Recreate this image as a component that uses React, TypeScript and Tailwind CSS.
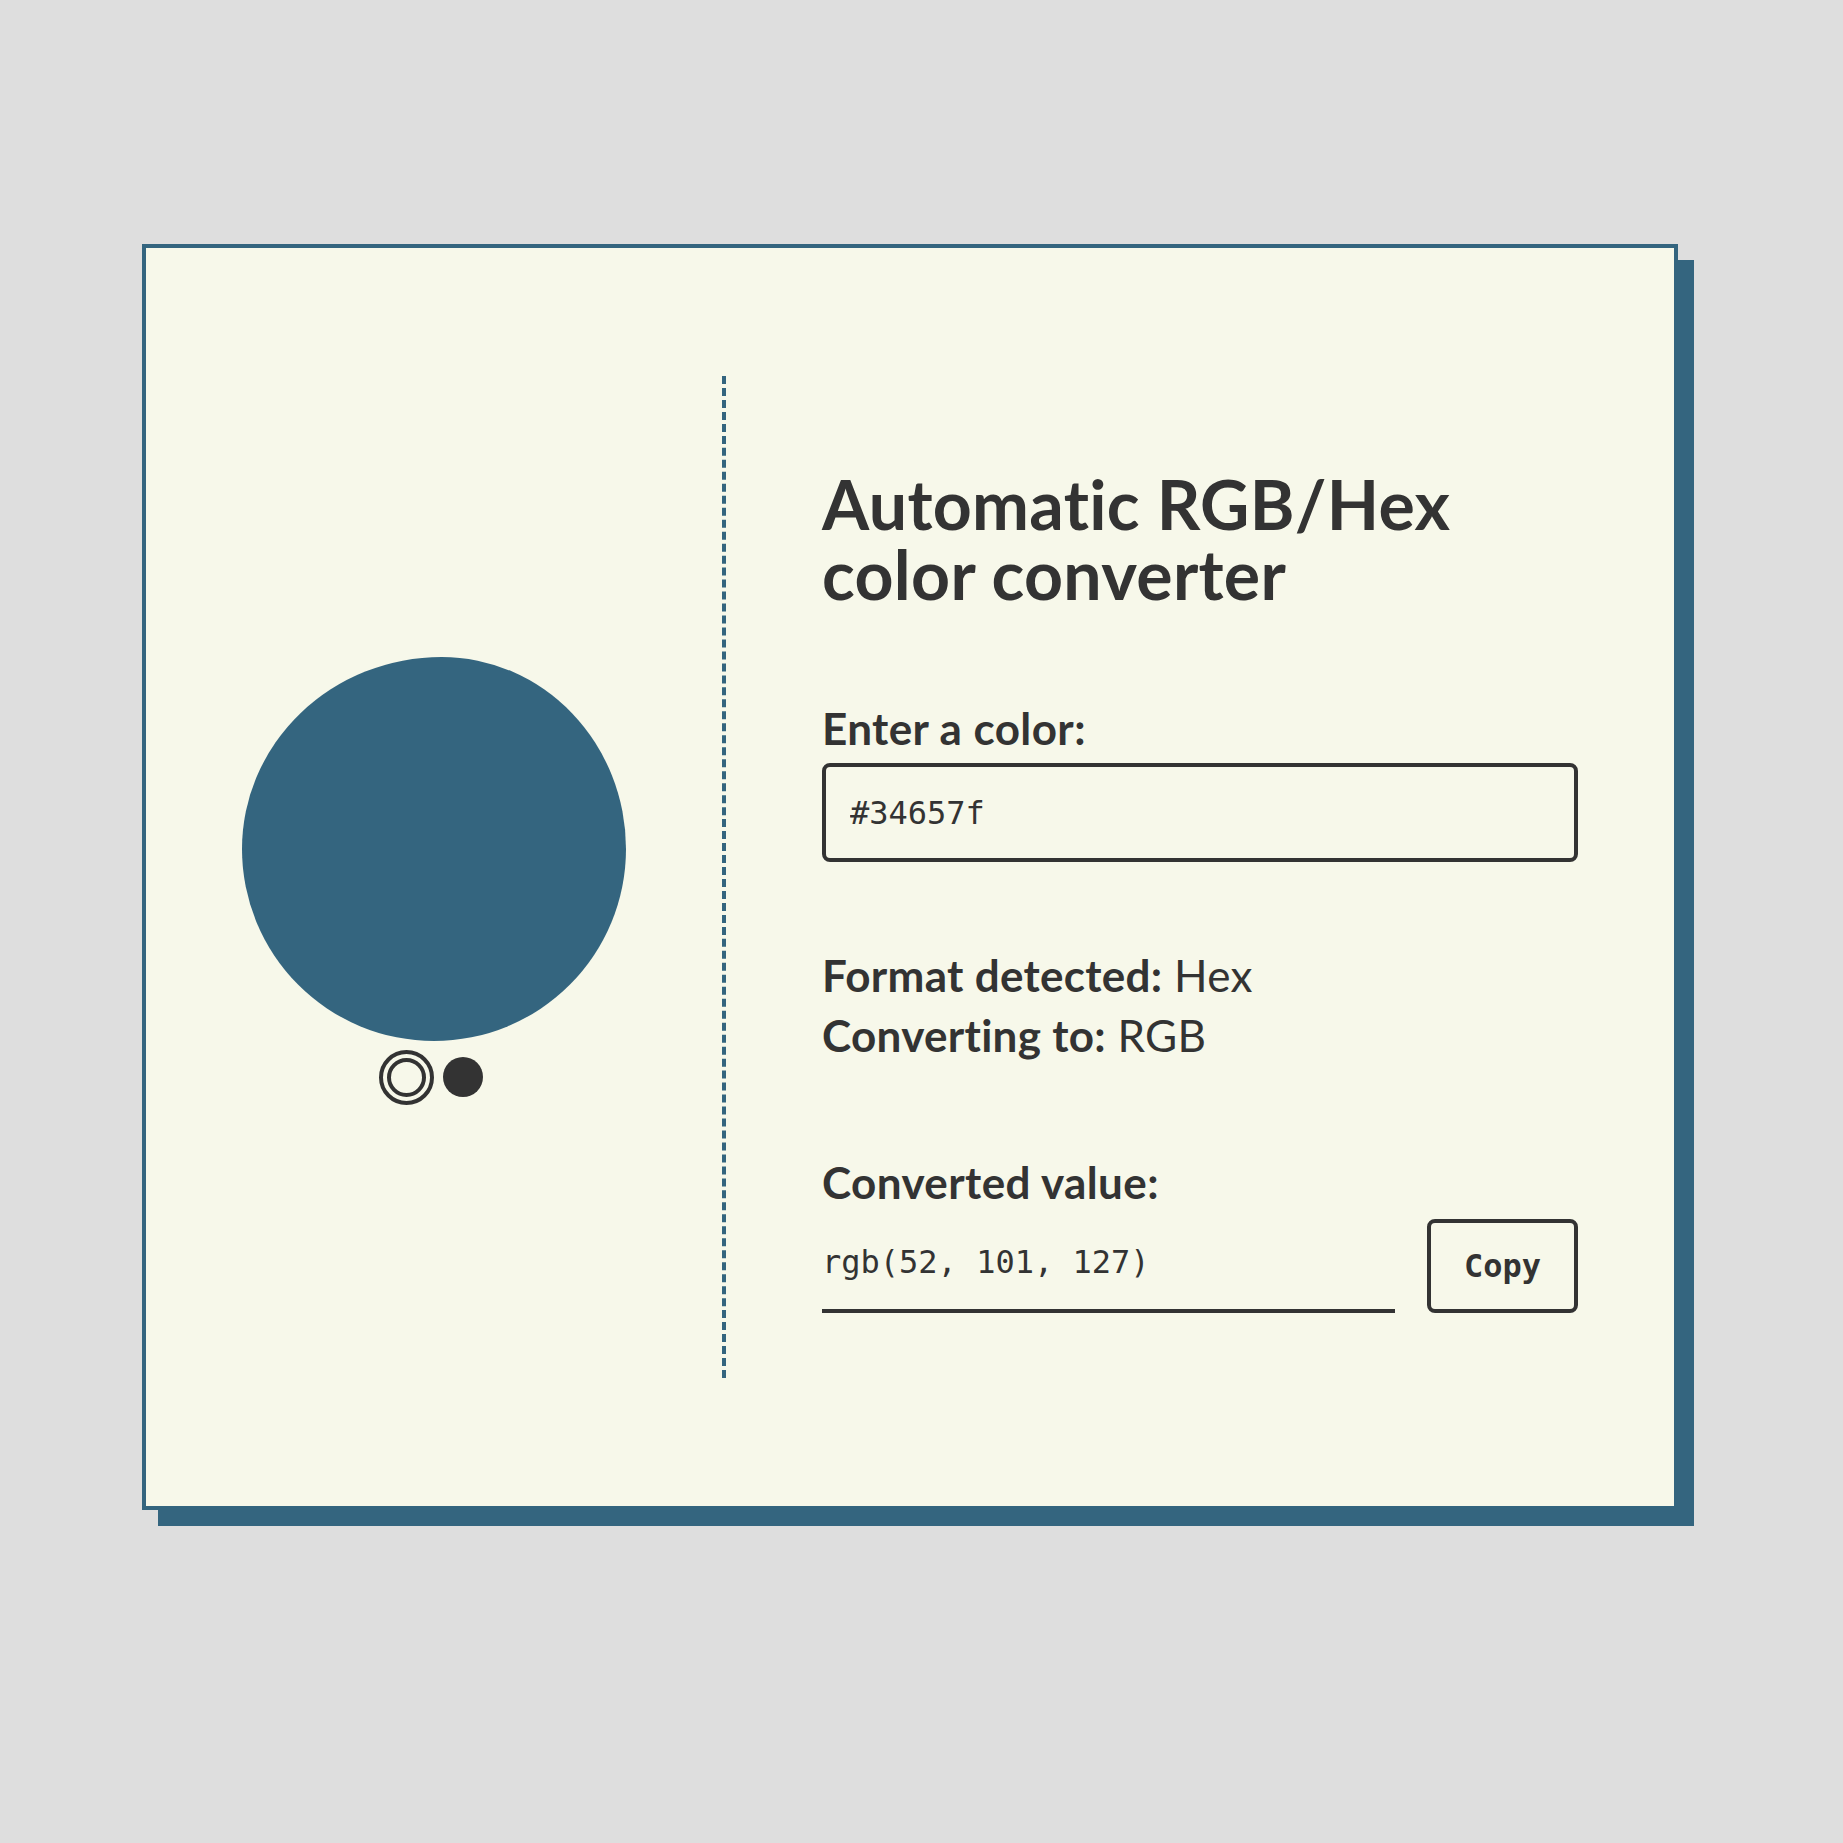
import React from "react"

function Swatch() {
  return (
    <div className="flex flex-col items-center">
      <div className="w-[384px] h-[384px] bg-[#34657f] rounded-[52%_48%_50%_50%/50%_50%_50%_50%]" />
      <div className="mt-[9px] mr-[7px] flex items-center gap-[9px]">
        <button className="w-[55px] h-[55px] rounded-full border-4 border-[#333333] flex items-center justify-center">
          <span className="block w-[39px] h-[39px] rounded-full border-4 border-[#333333]" />
        </button>
        <button className="w-[40px] h-[40px] rounded-full bg-[#333333]" />
      </div>
    </div>
  )
}

export default function App() {
  return (
    <div className="min-h-screen bg-[#dedede] pt-[244px] pl-[142px] font-[Lato,'Noto_Sans',sans-serif]">
      <div className="w-[1536px] h-[1266px] border-4 border-[#34657f] bg-[#f7f8ea] shadow-[16px_16px_0_#34657f] flex py-[128px] text-[#333333]">
        <div className="w-[576px] flex items-center justify-center pt-[7px]">
          <Swatch />
        </div>

        <div className="flex-1 border-l-4 border-dashed border-[#34657f] px-24 pt-[93px] flex flex-col">
          <h1 className="text-[68px] font-bold tracking-[0.3px] [font-variant-ligatures:none]">
            <span className="block h-[70px] leading-[70px]">Automatic RGB/Hex</span>
            <span className="block h-[70px] leading-[70px]">color converter</span>
          </h1>

          <label className="mt-[89px] text-[44px] leading-[60px] font-bold tracking-[0.4px]">Enter a color:</label>
          <input
            className="mt-[5px] h-[99px] w-full border-4 border-[#333333] rounded-lg bg-transparent px-6 text-[32px] text-[#333333] outline-none font-['DejaVu_Sans_Mono','Liberation_Mono',monospace]"
            defaultValue="#34657f"
            readOnly
          />

          <div className="mt-[83px] text-[44px] leading-[60px] tracking-[0.3px] [font-variant-ligatures:none]">
            <p>
              <span className="font-bold">Format detected:</span> Hex
            </p>
            <p>
              <span className="font-bold">Converting to:</span> RGB
            </p>
          </div>

          <p className="mt-[87px] text-[44px] leading-[60px] font-bold tracking-[0.4px]">Converted value:</p>
          <div className="mt-[7px] flex items-end gap-8">
            <div className="flex-1 border-b-4 border-[#333333] pb-[27px] text-[32px] leading-[40px] font-['DejaVu_Sans_Mono','Liberation_Mono',monospace]">
              rgb(52, 101, 127)
            </div>
            <button className="w-[151px] h-[94px] border-4 border-[#333333] rounded-lg text-[32px] font-bold font-['DejaVu_Sans_Mono','Liberation_Mono',monospace]">
              Copy
            </button>
          </div>
        </div>
      </div>
    </div>
  )
}
